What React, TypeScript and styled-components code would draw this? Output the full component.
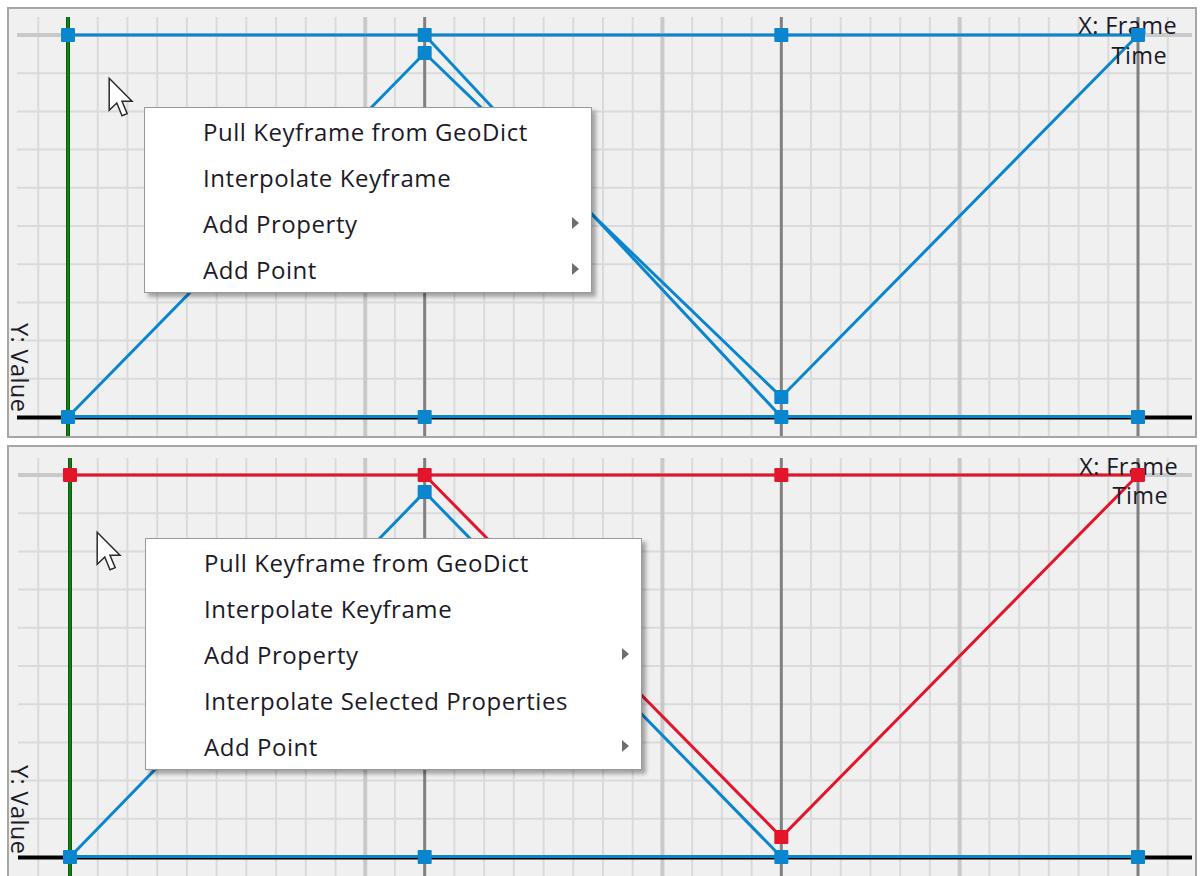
import styled, { createGlobalStyle } from "styled-components"

const GlobalStyle = createGlobalStyle`
  html, body {
    margin: 0;
    padding: 0;
    background: #ffffff;
    overflow: hidden;
  }
  body {
    font-family: "Open Sans", "Noto Sans", sans-serif;
  }
`

const BLUE = "#0a86cf"
const RED = "#e3152b"
const KEYS = [59, 415.67, 772.33, 1129]
const STEP_X = (KEYS[1] - KEYS[0]) / 12
const STEP_Y = 38.2

const Page = styled.div`
  display: flex;
  flex-direction: column;
  gap: 7px;
  width: 1200px;
  height: 876px;
  padding: 7px 3px 0 7px;
  box-sizing: border-box;
  overflow: hidden;
`

const Panel = styled.div<{ $height: number }>`
  position: relative;
  flex: none;
  width: 1190px;
  height: ${p => p.$height}px;
  box-sizing: border-box;
  border: 2px solid #a6a6a6;
  background: #f0f0f0;
  overflow: hidden;
`

const ChartSvg = styled.svg`
  display: block;
  width: 100%;
  height: 100%;
`

const AxisText = styled.text`
  font-family: "Open Sans", "Noto Sans", sans-serif;
  font-size: 23.5px;
  letter-spacing: 0.4px;
  fill: #1c1a28;
`

const Menu = styled.div<{ $left: number; $top: number; $width: number }>`
  position: absolute;
  left: ${p => p.$left}px;
  top: ${p => p.$top}px;
  width: ${p => p.$width}px;
  box-sizing: border-box;
  background: #ffffff;
  border: 1px solid #999999;
  box-shadow: 4px 4px 4px rgba(0, 0, 0, 0.32);
`

const MenuItem = styled.div`
  display: flex;
  align-items: center;
  height: 46px;
  padding: 0 12px 0 58px;
  font-size: 24px;
  letter-spacing: 0.55px;
  color: #1c1a28;
  white-space: nowrap;
`

const SubArrow = styled.span`
  margin-left: auto;
  width: 0;
  height: 0;
  border-top: 6px solid transparent;
  border-bottom: 6px solid transparent;
  border-left: 7px solid #6e6e6e;
`

const Cursor = styled.svg<{ $x: number; $y: number }>`
  position: absolute;
  left: ${p => p.$x}px;
  top: ${p => p.$y}px;
  width: 26px;
  height: 41px;
  overflow: visible;
`

interface Dot {
  x: number
  y: number
  color: string
}

interface Series {
  color: string
  pts: [number, number][]
}

interface PanelSpec {
  height: number
  axisX: number
  topY: number
  botY: number
  gridTop: number
  gridLeft: number
  series: Series[]
  dots: Dot[]
  xLabel: { frameX: number; frameY: number; timeX: number; timeY: number }
  yLabel: { x: number; y: number }
  menu: { left: number; top: number; width: number; items: { label: string; sub?: boolean }[] }
  cursor: { x: number; y: number }
}

const GRID_RIGHT = 1183

function Chart({ spec }: { spec: PanelSpec }) {
  const { axisX, topY, botY, gridTop, gridLeft, height } = spec
  const bottom = height - 4
  const vLines: { x: number; kind: "minor" | "major" }[] = []
  for (let k = -1; k < 40; k++) {
    const x = KEYS[0] + k * STEP_X
    if (x < gridLeft || x > GRID_RIGHT) continue
    if (k === 0 || k % 12 === 0) continue
    vLines.push({ x, kind: k % 10 === 0 ? "major" : "minor" })
  }
  const hLines: number[] = []
  for (let k = 1; k < 12; k++) {
    const y = topY + k * STEP_Y
    if (y < botY - 4) hLines.push(y)
  }

  return (
    <ChartSvg viewBox={`0 0 1186 ${height - 4}`}>
      {vLines.filter(l => l.kind === "minor").map(l => (
        <line key={l.x} x1={l.x} x2={l.x} y1={gridTop} y2={bottom} stroke="#dadada" strokeWidth={2} />
      ))}
      {hLines.map(y => (
        <line key={y} x1={gridLeft} x2={GRID_RIGHT} y1={y} y2={y} stroke="#dadada" strokeWidth={2} />
      ))}
      {vLines.filter(l => l.kind === "major").map(l => (
        <line key={l.x} x1={l.x} x2={l.x} y1={gridTop} y2={bottom} stroke="#c9c9c9" strokeWidth={4} />
      ))}
      {KEYS.slice(1).map(x => (
        <line key={x} x1={x} x2={x} y1={gridTop} y2={bottom} stroke="#808080" strokeWidth={3} />
      ))}

      <AxisText transform={`translate(${spec.yLabel.x} ${spec.yLabel.y}) rotate(90)`}>Y: Value</AxisText>

      <line x1={gridLeft} x2={GRID_RIGHT} y1={topY} y2={topY} stroke="#c9c9c9" strokeWidth={4} />
      <line x1={gridLeft} x2={GRID_RIGHT} y1={botY + 0.5} y2={botY + 0.5} stroke="#000" strokeWidth={4} />
      <line x1={axisX} x2={axisX} y1={gridTop} y2={bottom} stroke="#0a5c0a" strokeWidth={4} />
      <line x1={axisX} x2={axisX} y1={gridTop} y2={bottom} stroke="#118111" strokeWidth={2} />

      {spec.series.map((s, i) => (
        <polyline
          key={i}
          points={s.pts.map(p => p.join(",")).join(" ")}
          fill="none"
          stroke={s.color}
          strokeWidth={3}
          strokeLinejoin="miter"
        />
      ))}

      <AxisText x={spec.xLabel.frameX} y={spec.xLabel.frameY} textAnchor="end">X: Frame</AxisText>
      <AxisText x={spec.xLabel.timeX} y={spec.xLabel.timeY} textAnchor="end">Time</AxisText>

      {spec.dots.map((d, i) => (
        <rect key={i} x={d.x - 7} y={d.y - 7} width={14} height={14} rx={1} fill={d.color} />
      ))}
    </ChartSvg>
  )
}

function ArrowCursor({ x, y }: { x: number; y: number }) {
  return (
    <Cursor $x={x} $y={y} viewBox="0 0 13 20.5">
      <path
        d="M0.6 0.6 L0.6 16.6 L4.4 13 L7 19.4 L9.6 18.3 L7 12.1 L12 12.1 Z"
        fill="#ffffff"
        stroke="#2a2a2a"
        strokeWidth={0.75}
        strokeLinejoin="miter"
      />
    </Cursor>
  )
}

function ChartPanel({ spec }: { spec: PanelSpec }) {
  return (
    <Panel $height={spec.height}>
      <Chart spec={spec} />
      <ArrowCursor x={spec.cursor.x} y={spec.cursor.y} />
      <Menu $left={spec.menu.left} $top={spec.menu.top} $width={spec.menu.width}>
        {spec.menu.items.map(item => (
          <MenuItem key={item.label}>
            {item.label}
            {item.sub && <SubArrow />}
          </MenuItem>
        ))}
      </Menu>
    </Panel>
  )
}

const topSpec: PanelSpec = {
  height: 431,
  axisX: 59,
  topY: 26,
  botY: 408,
  gridTop: 8,
  gridLeft: 8,
  series: [
    { color: BLUE, pts: [[KEYS[0], 26], [KEYS[3], 26]] },
    { color: BLUE, pts: [[KEYS[0], 407.5], [KEYS[3], 407.5]] },
    { color: BLUE, pts: [[KEYS[0], 408], [KEYS[1], 44], [KEYS[2], 388], [KEYS[3], 26]] },
    { color: BLUE, pts: [[KEYS[1], 26], [KEYS[2], 408]] },
  ],
  dots: [
    ...KEYS.map(x => ({ x, y: 26, color: BLUE })),
    ...KEYS.map(x => ({ x, y: 408, color: BLUE })),
    { x: KEYS[1], y: 44, color: BLUE },
    { x: KEYS[2], y: 388, color: BLUE },
  ],
  xLabel: { frameX: 1168, frameY: 25, timeX: 1158, timeY: 55 },
  yLabel: { x: 2, y: 314 },
  menu: {
    left: 135,
    top: 98,
    width: 448,
    items: [
      { label: "Pull Keyframe from GeoDict" },
      { label: "Interpolate Keyframe" },
      { label: "Add Property", sub: true },
      { label: "Add Point", sub: true },
    ],
  },
  cursor: { x: 99, y: 68 },
}

const bottomSpec: PanelSpec = {
  height: 440,
  axisX: 61,
  topY: 28,
  botY: 410,
  gridTop: 11,
  gridLeft: 9,
  series: [
    { color: BLUE, pts: [[KEYS[0] + 2, 409.5], [KEYS[3], 409.5]] },
    { color: BLUE, pts: [[KEYS[0] + 2, 410], [KEYS[1], 45], [KEYS[2], 410]] },
    { color: RED, pts: [[KEYS[0] + 2, 28], [KEYS[3], 28]] },
    { color: RED, pts: [[KEYS[1], 28], [KEYS[2], 390], [KEYS[3], 28]] },
  ],
  dots: [
    ...KEYS.map((x, i) => ({ x: i === 0 ? x + 2 : x, y: 410, color: BLUE })),
    { x: KEYS[1], y: 45, color: BLUE },
    ...KEYS.map((x, i) => ({ x: i === 0 ? x + 2 : x, y: 28, color: RED })),
    { x: KEYS[2], y: 390, color: RED },
  ],
  xLabel: { frameX: 1169, frameY: 28, timeX: 1159, timeY: 57 },
  yLabel: { x: 2, y: 318 },
  menu: {
    left: 136,
    top: 91,
    width: 497,
    items: [
      { label: "Pull Keyframe from GeoDict" },
      { label: "Interpolate Keyframe" },
      { label: "Add Property", sub: true },
      { label: "Interpolate Selected Properties" },
      { label: "Add Point", sub: true },
    ],
  },
  cursor: { x: 87, y: 84 },
}

export default function App() {
  return (
    <>
      <GlobalStyle />
      <Page>
        <ChartPanel spec={topSpec} />
        <ChartPanel spec={bottomSpec} />
      </Page>
    </>
  )
}
